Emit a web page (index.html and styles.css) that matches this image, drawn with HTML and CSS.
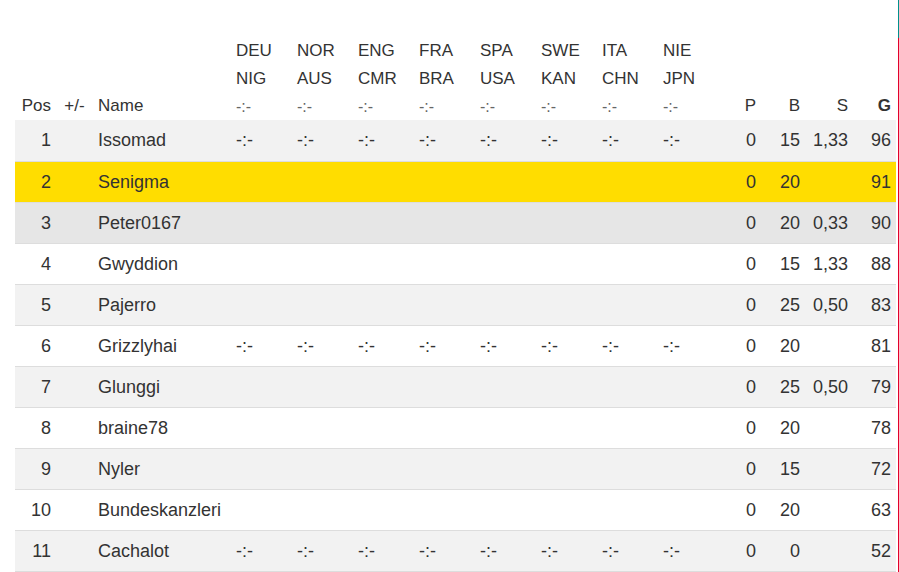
FILE: index.html
```html
<!DOCTYPE html>
<html lang="de">
<head>
<meta charset="utf-8">
<title>Tabelle</title>
<link rel="stylesheet" href="styles.css">
</head>
<body>
<div class="page">
<table class="standings">
  <colgroup>
    <col class="c-pos"><col class="c-diff"><col class="c-name">
    <col class="c-m"><col class="c-m"><col class="c-m"><col class="c-m">
    <col class="c-m"><col class="c-m"><col class="c-m"><col class="c-m">
    <col class="c-p"><col class="c-b"><col class="c-s"><col class="c-g">
  </colgroup>
  <thead>
    <tr>
      <th class="r">Pos</th>
      <th class="ctr">+/-</th>
      <th>Name</th>
      <th>DEU<br>NIG<span class="res">-:-</span></th>
      <th>NOR<br>AUS<span class="res">-:-</span></th>
      <th>ENG<br>CMR<span class="res">-:-</span></th>
      <th>FRA<br>BRA<span class="res">-:-</span></th>
      <th>SPA<br>USA<span class="res">-:-</span></th>
      <th>SWE<br>KAN<span class="res">-:-</span></th>
      <th>ITA<br>CHN<span class="res">-:-</span></th>
      <th>NIE<br>JPN<span class="res">-:-</span></th>
      <th class="r">P</th>
      <th class="r">B</th>
      <th class="r">S</th>
      <th class="r bold">G</th>
    </tr>
  </thead>
  <tbody>
    <tr class="alt">
      <td class="r">1</td><td></td><td>Issomad</td>
      <td>-:-</td><td>-:-</td><td>-:-</td><td>-:-</td><td>-:-</td><td>-:-</td><td>-:-</td><td>-:-</td>
      <td class="r">0</td><td class="r">15</td><td class="r">1,33</td><td class="r">96</td>
    </tr>
    <tr class="me">
      <td class="r">2</td><td></td><td>Senigma</td>
      <td></td><td></td><td></td><td></td><td></td><td></td><td></td><td></td>
      <td class="r">0</td><td class="r">20</td><td class="r"></td><td class="r">91</td>
    </tr>
    <tr class="hover">
      <td class="r">3</td><td></td><td>Peter0167</td>
      <td></td><td></td><td></td><td></td><td></td><td></td><td></td><td></td>
      <td class="r">0</td><td class="r">20</td><td class="r">0,33</td><td class="r">90</td>
    </tr>
    <tr>
      <td class="r">4</td><td></td><td>Gwyddion</td>
      <td></td><td></td><td></td><td></td><td></td><td></td><td></td><td></td>
      <td class="r">0</td><td class="r">15</td><td class="r">1,33</td><td class="r">88</td>
    </tr>
    <tr class="alt">
      <td class="r">5</td><td></td><td>Pajerro</td>
      <td></td><td></td><td></td><td></td><td></td><td></td><td></td><td></td>
      <td class="r">0</td><td class="r">25</td><td class="r">0,50</td><td class="r">83</td>
    </tr>
    <tr>
      <td class="r">6</td><td></td><td>Grizzlyhai</td>
      <td>-:-</td><td>-:-</td><td>-:-</td><td>-:-</td><td>-:-</td><td>-:-</td><td>-:-</td><td>-:-</td>
      <td class="r">0</td><td class="r">20</td><td class="r"></td><td class="r">81</td>
    </tr>
    <tr class="alt">
      <td class="r">7</td><td></td><td>Glunggi</td>
      <td></td><td></td><td></td><td></td><td></td><td></td><td></td><td></td>
      <td class="r">0</td><td class="r">25</td><td class="r">0,50</td><td class="r">79</td>
    </tr>
    <tr>
      <td class="r">8</td><td></td><td>braine78</td>
      <td></td><td></td><td></td><td></td><td></td><td></td><td></td><td></td>
      <td class="r">0</td><td class="r">20</td><td class="r"></td><td class="r">78</td>
    </tr>
    <tr class="alt">
      <td class="r">9</td><td></td><td>Nyler</td>
      <td></td><td></td><td></td><td></td><td></td><td></td><td></td><td></td>
      <td class="r">0</td><td class="r">15</td><td class="r"></td><td class="r">72</td>
    </tr>
    <tr>
      <td class="r">10</td><td></td><td>Bundeskanzleri</td>
      <td></td><td></td><td></td><td></td><td></td><td></td><td></td><td></td>
      <td class="r">0</td><td class="r">20</td><td class="r"></td><td class="r">63</td>
    </tr>
    <tr class="alt">
      <td class="r">11</td><td></td><td>Cachalot</td>
      <td>-:-</td><td>-:-</td><td>-:-</td><td>-:-</td><td>-:-</td><td>-:-</td><td>-:-</td><td>-:-</td>
      <td class="r">0</td><td class="r">0</td><td class="r"></td><td class="r">52</td>
    </tr>
  </tbody>
</table>
</div>
</body>
</html>
```

FILE: styles.css
```css
html, body {
  margin: 0;
  padding: 0;
}
body {
  width: 899px;
  min-height: 572px;
  background:
    linear-gradient(to bottom, #00918c 0, #00918c 38px, #e2002a 38px, #e2002a 100%) right top / 1px 100% no-repeat,
    #ffffff;
  font-family: "Liberation Sans", Arial, sans-serif;
  color: #333333;
}
.page {
  padding: 37px 0 0 15px;
}
.standings {
  width: 881px;
  table-layout: fixed;
  border-collapse: collapse;
  border-spacing: 0;
}
.standings col.c-pos { width: 41px; }
.standings col.c-diff { width: 37px; }
.standings col.c-name { width: 138px; }
.standings col.c-m { width: 61px; }
.standings col.c-p { width: 42px; }
.standings col.c-b { width: 44px; }
.standings col.c-s { width: 48px; }
.standings col.c-g { width: 43px; }

.standings th,
.standings td {
  box-sizing: border-box;
  padding: 0 5px;
  text-align: left;
  white-space: nowrap;
}
.standings th {
  font-size: 17px;
  font-weight: normal;
  line-height: 28px;
  vertical-align: bottom;
  color: #333333;
  padding-bottom: 0;
}
.standings th .res {
  display: block;
  font-size: 16px;
  line-height: 27px;
  color: #666666;
}
.standings td {
  font-size: 18px;
  height: 41px;
  line-height: 20px;
  vertical-align: middle;
  border-bottom: 1px solid #dddddd;
}
.standings .r { text-align: right; }
.standings .ctr { text-align: center; }
.standings .bold { font-weight: bold; }

.standings tbody tr { background: #ffffff; }
.standings tbody tr.alt { background: #f2f2f2; }
.standings tbody tr.me { background: #ffdd00; }
.standings tbody tr.hover { background: #e6e6e6; }
```
